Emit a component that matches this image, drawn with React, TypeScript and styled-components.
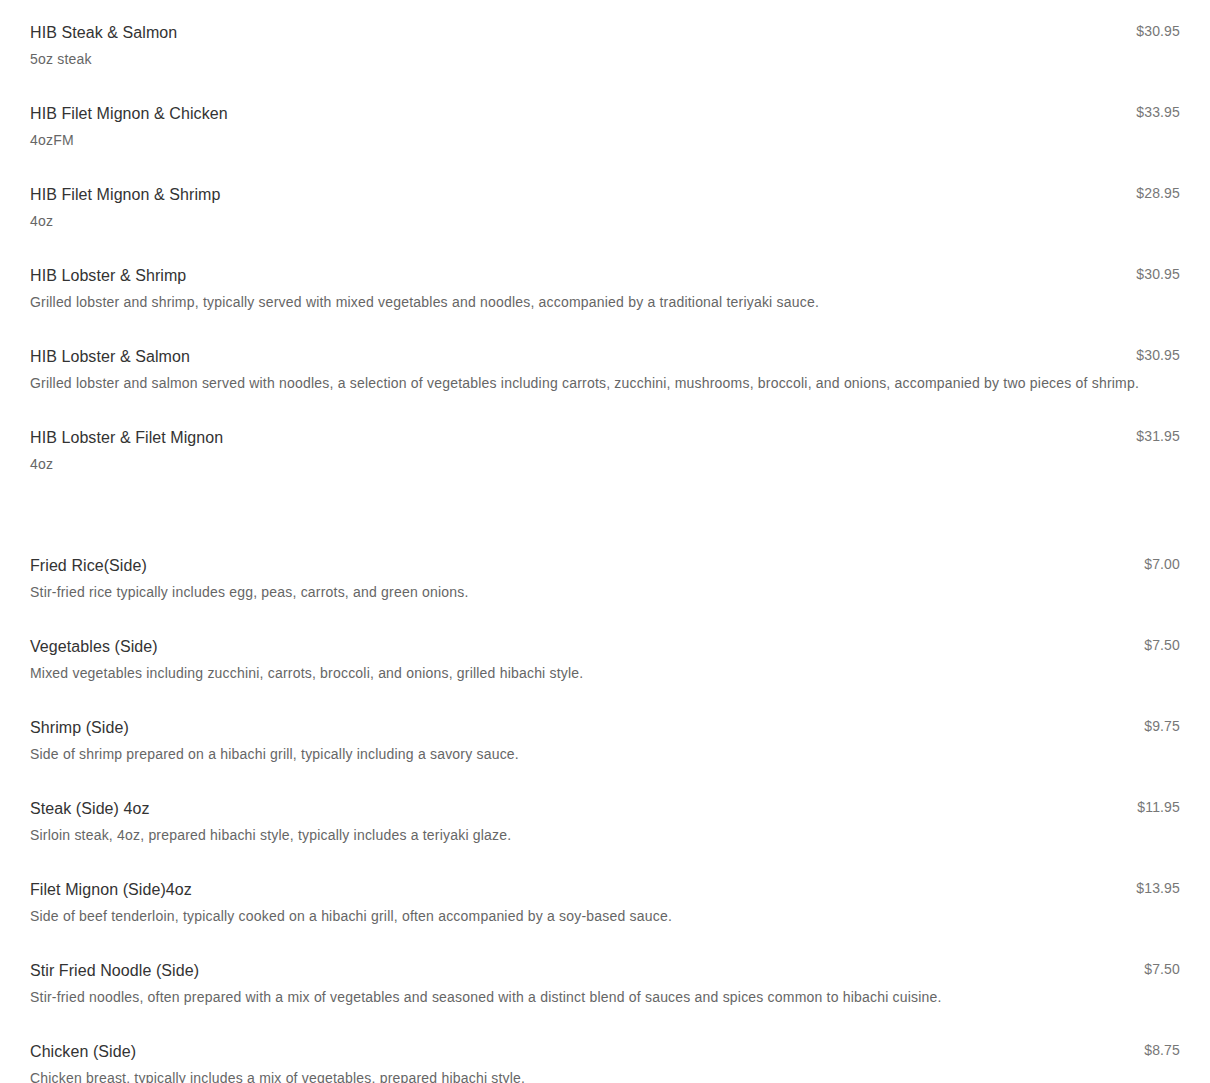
import React from "react";
import styled, { createGlobalStyle } from "styled-components";

const GlobalStyle = createGlobalStyle`
  body {
    margin: 0;
    background: #fff;
    font-family: "Liberation Sans", Arial, sans-serif;
  }
`;

const Page = styled.div`
  padding: 23px 30px 0;
  display: flex;
  flex-direction: column;
  gap: 47px;
`;

const Section = styled.div`
  display: flex;
  flex-direction: column;
`;

const Item = styled.div`
  display: grid;
  grid-template-columns: 1fr auto;
  grid-template-rows: auto auto;
  align-content: start;
  align-items: start;
  column-gap: 20px;
  row-gap: 6px;
  height: 81px;
`;

const Title = styled.div`
  font-size: 16px;
  line-height: 20px;
  letter-spacing: 0.08px;
  color: #333;
`;

const Desc = styled.div`
  grid-column: 1 / span 2;
  font-size: 14px;
  line-height: 20px;
  letter-spacing: 0.2px;
  color: #666;
`;

const Price = styled.div`
  font-size: 14px;
  line-height: 16px;
  letter-spacing: 0.15px;
  color: #777;
  text-align: right;
`;

interface MenuItem {
  name: string;
  desc: string;
  price: string;
}

const combos: MenuItem[] = [
  { name: "HIB Steak & Salmon", desc: "5oz steak", price: "$30.95" },
  { name: "HIB Filet Mignon & Chicken", desc: "4ozFM", price: "$33.95" },
  { name: "HIB Filet Mignon & Shrimp", desc: "4oz", price: "$28.95" },
  {
    name: "HIB Lobster & Shrimp",
    desc: "Grilled lobster and shrimp, typically served with mixed vegetables and noodles, accompanied by a traditional teriyaki sauce.",
    price: "$30.95"
  },
  {
    name: "HIB Lobster & Salmon",
    desc: "Grilled lobster and salmon served with noodles, a selection of vegetables including carrots, zucchini, mushrooms, broccoli, and onions, accompanied by two pieces of shrimp.",
    price: "$30.95"
  },
  { name: "HIB Lobster & Filet Mignon", desc: "4oz", price: "$31.95" }
];

const sides: MenuItem[] = [
  {
    name: "Fried Rice(Side)",
    desc: "Stir-fried rice typically includes egg, peas, carrots, and green onions.",
    price: "$7.00"
  },
  {
    name: "Vegetables (Side)",
    desc: "Mixed vegetables including zucchini, carrots, broccoli, and onions, grilled hibachi style.",
    price: "$7.50"
  },
  {
    name: "Shrimp (Side)",
    desc: "Side of shrimp prepared on a hibachi grill, typically including a savory sauce.",
    price: "$9.75"
  },
  {
    name: "Steak (Side) 4oz",
    desc: "Sirloin steak, 4oz, prepared hibachi style, typically includes a teriyaki glaze.",
    price: "$11.95"
  },
  {
    name: "Filet Mignon (Side)4oz",
    desc: "Side of beef tenderloin, typically cooked on a hibachi grill, often accompanied by a soy-based sauce.",
    price: "$13.95"
  },
  {
    name: "Stir Fried Noodle (Side)",
    desc: "Stir-fried noodles, often prepared with a mix of vegetables and seasoned with a distinct blend of sauces and spices common to hibachi cuisine.",
    price: "$7.50"
  },
  {
    name: "Chicken (Side)",
    desc: "Chicken breast, typically includes a mix of vegetables, prepared hibachi style.",
    price: "$8.75"
  }
];

function MenuList({ items }: { items: MenuItem[] }) {
  return (
    <Section>
      {items.map(i => (
        <Item key={i.name}>
          <Title>{i.name}</Title>
          <Price>{i.price}</Price>
          <Desc>{i.desc}</Desc>
        </Item>
      ))}
    </Section>
  );
}

export default function App() {
  return (
    <>
      <GlobalStyle />
      <Page>
        <MenuList items={combos} />
        <MenuList items={sides} />
      </Page>
    </>
  );
}
